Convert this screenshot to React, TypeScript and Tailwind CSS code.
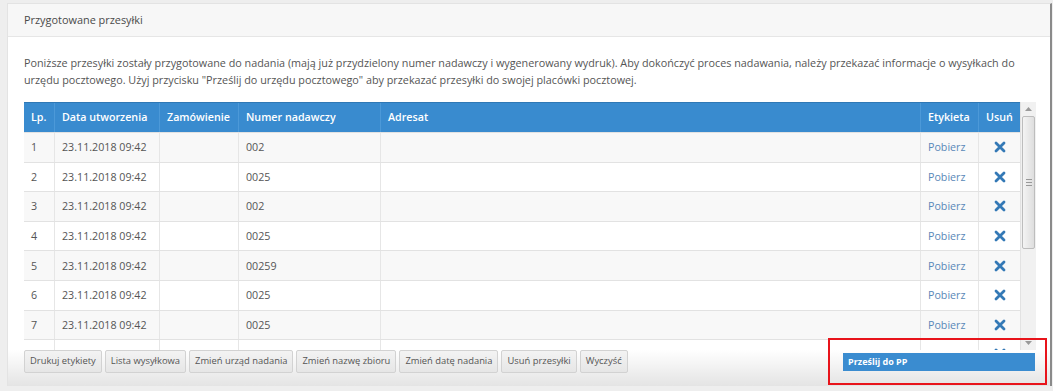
import React from "react";

const cols = [
  { label: "Lp.", w: "w-[30px]" },
  { label: "Data utworzenia", w: "w-[105px]" },
  { label: "Zamówienie", w: "w-[79px]" },
  { label: "Numer nadawczy", w: "w-[142px]" },
  { label: "Adresat", w: "w-[540px]" },
  { label: "Etykieta", w: "w-[58px]" },
  { label: "Usuń", w: "w-[42px]" },
];

const rows = [
  { lp: "1", num: "002", zam: "", adr: "" },
  { lp: "2", num: "0025", zam: "", adr: "" },
  { lp: "3", num: "002", zam: "", adr: "" },
  { lp: "4", num: "0025", zam: "", adr: "" },
  { lp: "5", num: "00259", zam: "", adr: "" },
  { lp: "6", num: "0025", zam: "", adr: "" },
  { lp: "7", num: "0025", zam: "", adr: "" },
  { lp: "8", num: "00256", zam: "5", adr: "tomasz krupa , sikorskiego 23/4, 66-436 Słońsk" },
];

const buttons = [
  "Drukuj etykiety",
  "Lista wysyłkowa",
  "Zmień urząd nadania",
  "Zmień nazwę zbioru",
  "Zmień datę nadania",
  "Usuń przesyłki",
  "Wyczyść",
];

function XIcon() {
  return (
    <svg width="12" height="12" viewBox="0 0 12 12">
      <path d="M2 2 L10 10 M10 2 L2 10" stroke="#3479b6" strokeWidth="2.8" strokeLinecap="round" />
    </svg>
  );
}

function Scrollbar() {
  return (
    <div className="w-[16px] h-full bg-[#f1f1f1] border-l border-[#e2e2e2] flex flex-col">
      <div className="h-[14px] flex items-center justify-center">
        <svg width="7" height="4" viewBox="0 0 7 4"><path d="M0 4 L3.5 0 L7 4 Z" fill="#9a9a9a" /></svg>
      </div>
      <div className="mx-[1px] h-[133px] rounded-[2px] border border-[#bdbdbd] bg-gradient-to-r from-[#f4f4f4] to-[#dedede] flex items-center justify-center">
        <div className="flex flex-col gap-[2px]">
          <div className="w-[6px] h-px bg-[#999]" />
          <div className="w-[6px] h-px bg-[#999]" />
          <div className="w-[6px] h-px bg-[#999]" />
        </div>
      </div>
      <div className="flex-1" />
      <div className="h-[14px] flex items-center justify-center">
        <svg width="7" height="4" viewBox="0 0 7 4"><path d="M0 0 L3.5 4 L7 0 Z" fill="#9a9a9a" /></svg>
      </div>
    </div>
  );
}

export default function App() {
  return (
    <div
      className="relative w-[1053px] h-[391px] overflow-hidden bg-[#eeeeee] pt-[3px] pl-[7px] pr-[1px]"
      style={{ fontFamily: '"Open Sans", "Noto Sans", sans-serif' }}
    >
      <div className="h-[383px] bg-white border-l border-t border-[#e3e3e3] border-r-2 border-r-[#8a8a8a] flex flex-col">
        <div className="h-[33px] shrink-0 bg-[#f7f7f7] border-b border-[#e6e6e6] px-[16px] flex items-center text-[10.9px] text-[#4a4a4a]">
          Przygotowane przesyłki
        </div>
        <div className="pl-[16px] pr-[14px] pt-[17px]">
          <p className="text-[10.8px] leading-[17px] text-[#555] mb-[14px] pr-[2px]">
            Poniższe przesyłki zostały przygotowane do nadania (mają już przydzielony numer nadawczy i wygenerowany wydruk). Aby dokończyć proces nadawania, należy przekazać informacje o wysyłkach do urzędu pocztowego. Użyj przycisku "Prześlij do urzędu pocztowego" aby przekazać przesyłki do swojej placówki pocztowej.
          </p>
          <div className="flex h-[248px] overflow-hidden">
            <div className="w-[996px] overflow-hidden">
              <div className="flex h-[30px] bg-[#398bcf] border-t border-[#2f78b5] text-white text-[10.7px] font-semibold">
                {cols.map((c, i) => (
                  <div
                    key={c.label}
                    className={`${c.w} shrink-0 px-[7px] flex items-center whitespace-nowrap ${i > 0 ? "border-l border-[#4c99d8]" : ""}`}
                  >
                    {c.label}
                  </div>
                ))}
              </div>
              {rows.map((r, i) => (
                <div
                  key={r.lp}
                  className={`flex h-[29.6px] border-t border-[#e2e2e2] text-[10.7px] text-[#555] whitespace-nowrap ${i % 2 === 0 ? "bg-[#f8f8f8]" : "bg-white"}`}
                >
                  <div className="w-[30px] shrink-0 px-[7px] flex items-center">{r.lp}</div>
                  <div className="w-[105px] shrink-0 px-[7px] flex items-center border-l border-[#e6e6e6]">23.11.2018 09:42</div>
                  <div className="w-[79px] shrink-0 px-[7px] flex items-center border-l border-[#e6e6e6]">{r.zam}</div>
                  <div className="w-[142px] shrink-0 px-[7px] flex items-center border-l border-[#e6e6e6]">{r.num}</div>
                  <div className="w-[540px] shrink-0 px-[7px] flex items-center border-l border-[#e6e6e6]">{r.adr}</div>
                  <div className="w-[58px] shrink-0 px-[7px] flex items-center border-l border-[#e6e6e6] text-[#5a88b8]">Pobierz</div>
                  <div className="w-[42px] shrink-0 flex items-center justify-center border-l border-[#e6e6e6]"><XIcon /></div>
                </div>
              ))}
            </div>
            <Scrollbar />
          </div>
        </div>
        <div className="flex-1 bg-gradient-to-b from-white to-[#e4e4e4] pl-[16px] flex items-start gap-[3px]">
          {buttons.map((b) => (
            <div
              key={b}
              className="h-[23px] px-[5px] flex items-center bg-gradient-to-b from-[#f3f3f3] to-[#e6e6e6] border border-[#d2d2d2] rounded-[2px] text-[9.4px] text-[#555] whitespace-nowrap"
            >
              {b}
            </div>
          ))}
        </div>
      </div>
      <div className="absolute left-[843px] top-[353px] w-[192px] h-[18px] bg-[#3a8cd0] flex items-center pl-[5px] text-white text-[9px] font-bold">
        Prześlij do PP
      </div>
      <div className="absolute left-[828px] top-[338px] w-[219px] h-[47px] border-2 border-[#e8141b]" />
    </div>
  );
}
